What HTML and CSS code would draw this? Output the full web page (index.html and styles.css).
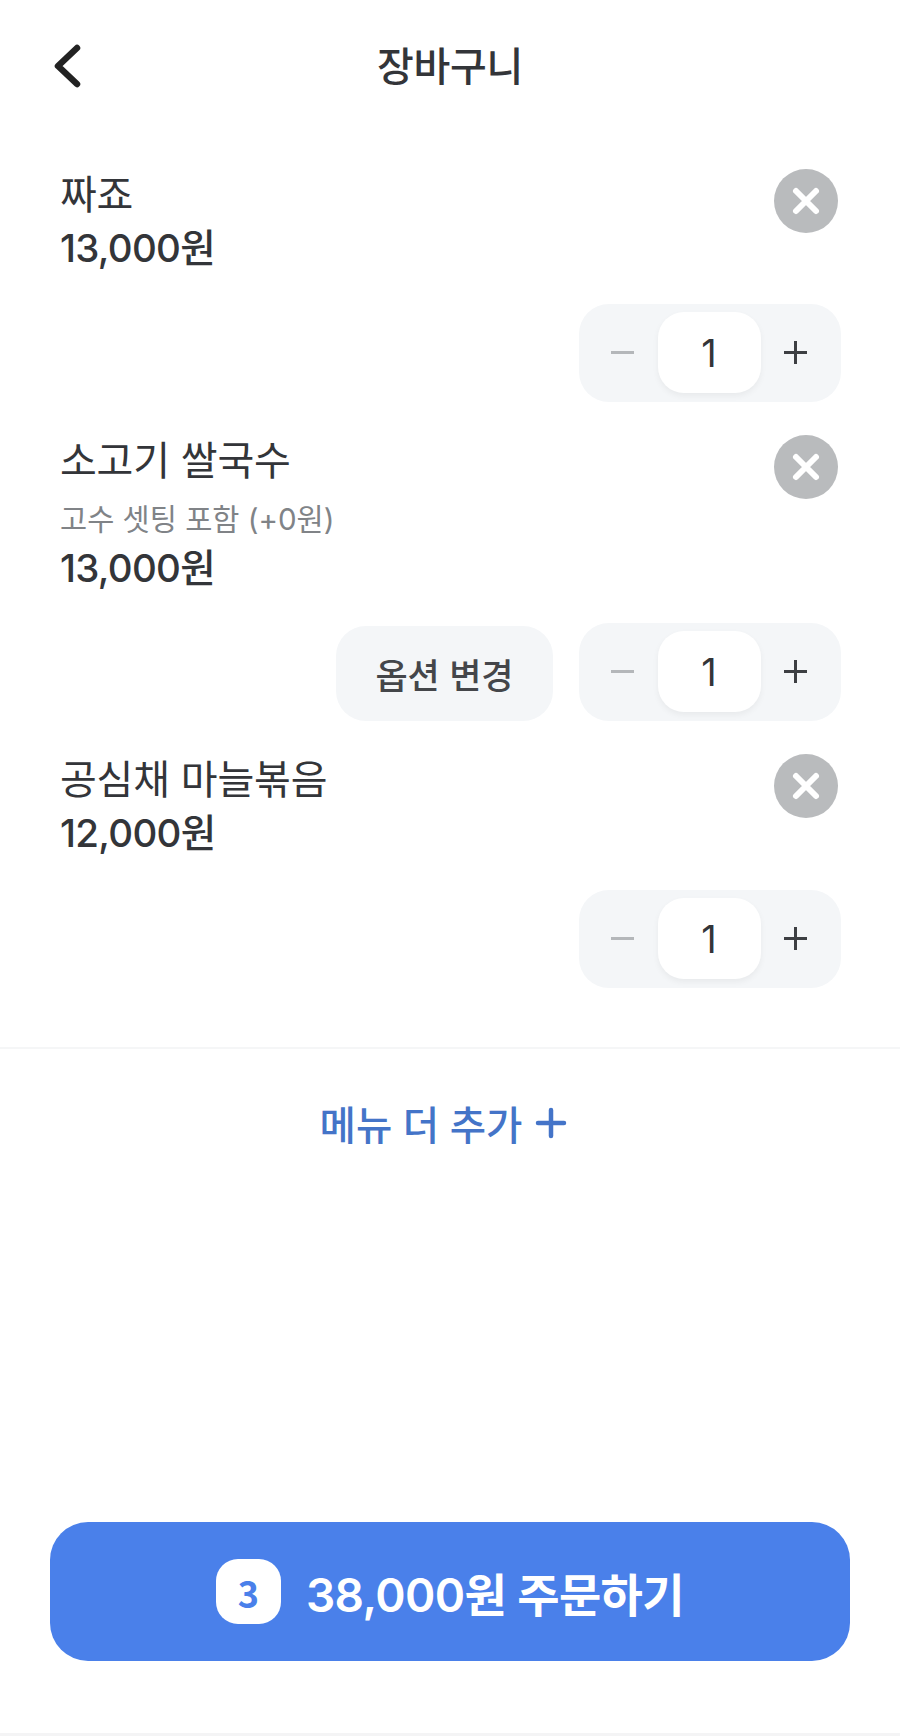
FILE: index.html
```html
<!DOCTYPE html>
<html lang="ko">
<head>
    <meta charset="UTF-8">
    <meta name="viewport" content="width=device-width, initial-scale=1.0">
    <title>장바구니</title>
    <link rel="stylesheet" href="styles.css">
</head>
<body>
    <div class="page">
        <header class="header">
            <button class="back" aria-label="back">
                <svg width="28" height="44" viewBox="0 0 28 44"><path d="M24 4 L5 22 L24 40" fill="none" stroke="#222" stroke-width="6.5" stroke-linecap="round" stroke-linejoin="round"/></svg>
            </button>
            <h1 class="title">장바구니</h1>
        </header>

        <div class="cart">
            <div class="item item-first">
                <div class="item-top">
                    <div class="info">
                        <div class="name">짜죠</div>
                        <div class="price">13,000원</div>
                    </div>
                    <button class="remove" aria-label="remove">
                        <svg width="30" height="30" viewBox="0 0 30 30"><path d="M5 5 L25 25 M25 5 L5 25" stroke="#fff" stroke-width="6" stroke-linecap="round"/></svg>
                    </button>
                </div>
                <div class="actions">
                    <div class="stepper">
                        <span class="minus"></span>
                        <span class="count">1</span>
                        <span class="plus"></span>
                    </div>
                </div>
            </div>

            <div class="item item-second">
                <div class="item-top">
                    <div class="info">
                        <div class="name">소고기 쌀국수</div>
                        <div class="option">고수 셋팅 포함 (+0원)</div>
                        <div class="price">13,000원</div>
                    </div>
                    <button class="remove" aria-label="remove">
                        <svg width="30" height="30" viewBox="0 0 30 30"><path d="M5 5 L25 25 M25 5 L5 25" stroke="#fff" stroke-width="6" stroke-linecap="round"/></svg>
                    </button>
                </div>
                <div class="actions">
                    <button class="change">옵션 변경</button>
                    <div class="stepper">
                        <span class="minus"></span>
                        <span class="count">1</span>
                        <span class="plus"></span>
                    </div>
                </div>
            </div>

            <div class="item item-third">
                <div class="item-top">
                    <div class="info">
                        <div class="name">공심채 마늘볶음</div>
                        <div class="price">12,000원</div>
                    </div>
                    <button class="remove" aria-label="remove">
                        <svg width="30" height="30" viewBox="0 0 30 30"><path d="M5 5 L25 25 M25 5 L5 25" stroke="#fff" stroke-width="6" stroke-linecap="round"/></svg>
                    </button>
                </div>
                <div class="actions">
                    <div class="stepper">
                        <span class="minus"></span>
                        <span class="count">1</span>
                        <span class="plus"></span>
                    </div>
                </div>
            </div>
        </div>

        <div class="add-more">
            <span>메뉴 더 추가</span>
            <svg width="32" height="32" viewBox="0 0 32 32"><path d="M3 16 H29 M16 3 V29" stroke="#4474c8" stroke-width="4.5" stroke-linecap="round"/></svg>
        </div>

        <div class="spacer"></div>

        <button class="order">
            <span class="badge">3</span>
            <span class="order-text">38,000원 주문하기</span>
        </button>
        <div class="bottom-strip"></div>
    </div>
</body>
</html>
```

FILE: styles.css
```css
* {
    box-sizing: border-box;
}

body {
    margin: 0;
    background-color: #fff;
    font-family: Inter, "Noto Sans CJK KR", sans-serif;
    color: #333539;
}

button {
    border: none;
    padding: 0;
    font-family: inherit;
    cursor: pointer;
}

.page {
    display: flex;
    flex-direction: column;
    height: 1736px;
}

.header {
    position: relative;
    height: 132px;
    display: flex;
    align-items: center;
    justify-content: center;
}

.back {
    position: absolute;
    left: 53px;
    top: 44px;
    background: none;
}

.title {
    margin: 0 0 4px 0;
    font-size: 40px;
    font-weight: 500;
    letter-spacing: -0.3px;
}

.cart {
    border-bottom: 2px solid #f5f6f7;
    padding: 0 59px 59px 60px;
}

.item-top {
    display: flex;
    justify-content: space-between;
    align-items: flex-start;
}

.item-first .item-top {
    padding-top: 37px;
    height: 172px;
}

.item-second .item-top {
    padding-top: 33px;
    height: 221px;
}

.item-third .item-top {
    padding-top: 33px;
    height: 169px;
}

.info {
    padding-top: 1px;
}

.name {
    font-size: 40px;
    line-height: 50px;
    letter-spacing: -0.2px;
}

.option {
    margin-top: 15px;
    font-size: 29.5px;
    line-height: 36px;
    color: #808387;
}

.price {
    margin-top: 3px;
    font-size: 38.5px;
    font-weight: 500;
    line-height: 50px;
    letter-spacing: -0.7px;
}

.option + .price {
    margin-top: 6px;
}

.remove {
    width: 64px;
    height: 64px;
    margin-right: 3px;
    border-radius: 50%;
    background-color: #b9bbbd;
    display: flex;
    align-items: center;
    justify-content: center;
}

.actions {
    display: flex;
    justify-content: flex-end;
    align-items: flex-end;
    gap: 26px;
}

.stepper {
    width: 262px;
    height: 98px;
    border-radius: 30px;
    background-color: #f4f6f8;
    display: flex;
    align-items: center;
    justify-content: space-between;
    padding: 0 34px 1px 32px;
}

.count {
    width: 103px;
    height: 81px;
    border-radius: 26px;
    background-color: #fff;
    box-shadow: 0 3px 6px rgba(0, 0, 0, 0.05);
    display: flex;
    align-items: center;
    justify-content: center;
    font-size: 38px;
}

.minus,
.plus {
    position: relative;
    width: 23px;
    height: 3px;
    background-color: #b4b7ba;
}

.plus {
    background-color: #3d3f43;
}

.plus::after {
    content: "";
    position: absolute;
    left: 10px;
    top: -10px;
    width: 3px;
    height: 23px;
    background-color: #3d3f43;
}

.change {
    width: 217px;
    height: 95px;
    border-radius: 30px;
    background-color: #f4f6f8;
    color: #44464a;
    font-size: 35px;
    font-weight: 500;
}

.add-more {
    height: 147px;
    padding-right: 13px;
    display: flex;
    align-items: center;
    justify-content: center;
    gap: 13px;
    color: #4474c8;
    font-size: 39.5px;
    font-weight: 500;
}

.spacer {
    flex: 1;
}

.order {
    width: 800px;
    height: 139px;
    margin: 0 50px 72px 50px;
    flex-shrink: 0;
    border-radius: 38px;
    background-color: #4a80ea;
    color: #fff;
    display: flex;
    align-items: center;
    justify-content: center;
    gap: 25px;
}

.badge {
    width: 65px;
    height: 65px;
    border-radius: 22px;
    background-color: #fff;
    color: #4a80ea;
    display: flex;
    align-items: center;
    justify-content: center;
    font-family: "Noto Sans CJK KR", sans-serif;
    font-size: 36px;
    font-weight: 700;
}

.order-text {
    font-size: 46px;
    font-weight: 600;
    letter-spacing: -0.6px;
}

.bottom-strip {
    height: 3px;
    flex-shrink: 0;
    background-color: #f4f4f5;
}
```
